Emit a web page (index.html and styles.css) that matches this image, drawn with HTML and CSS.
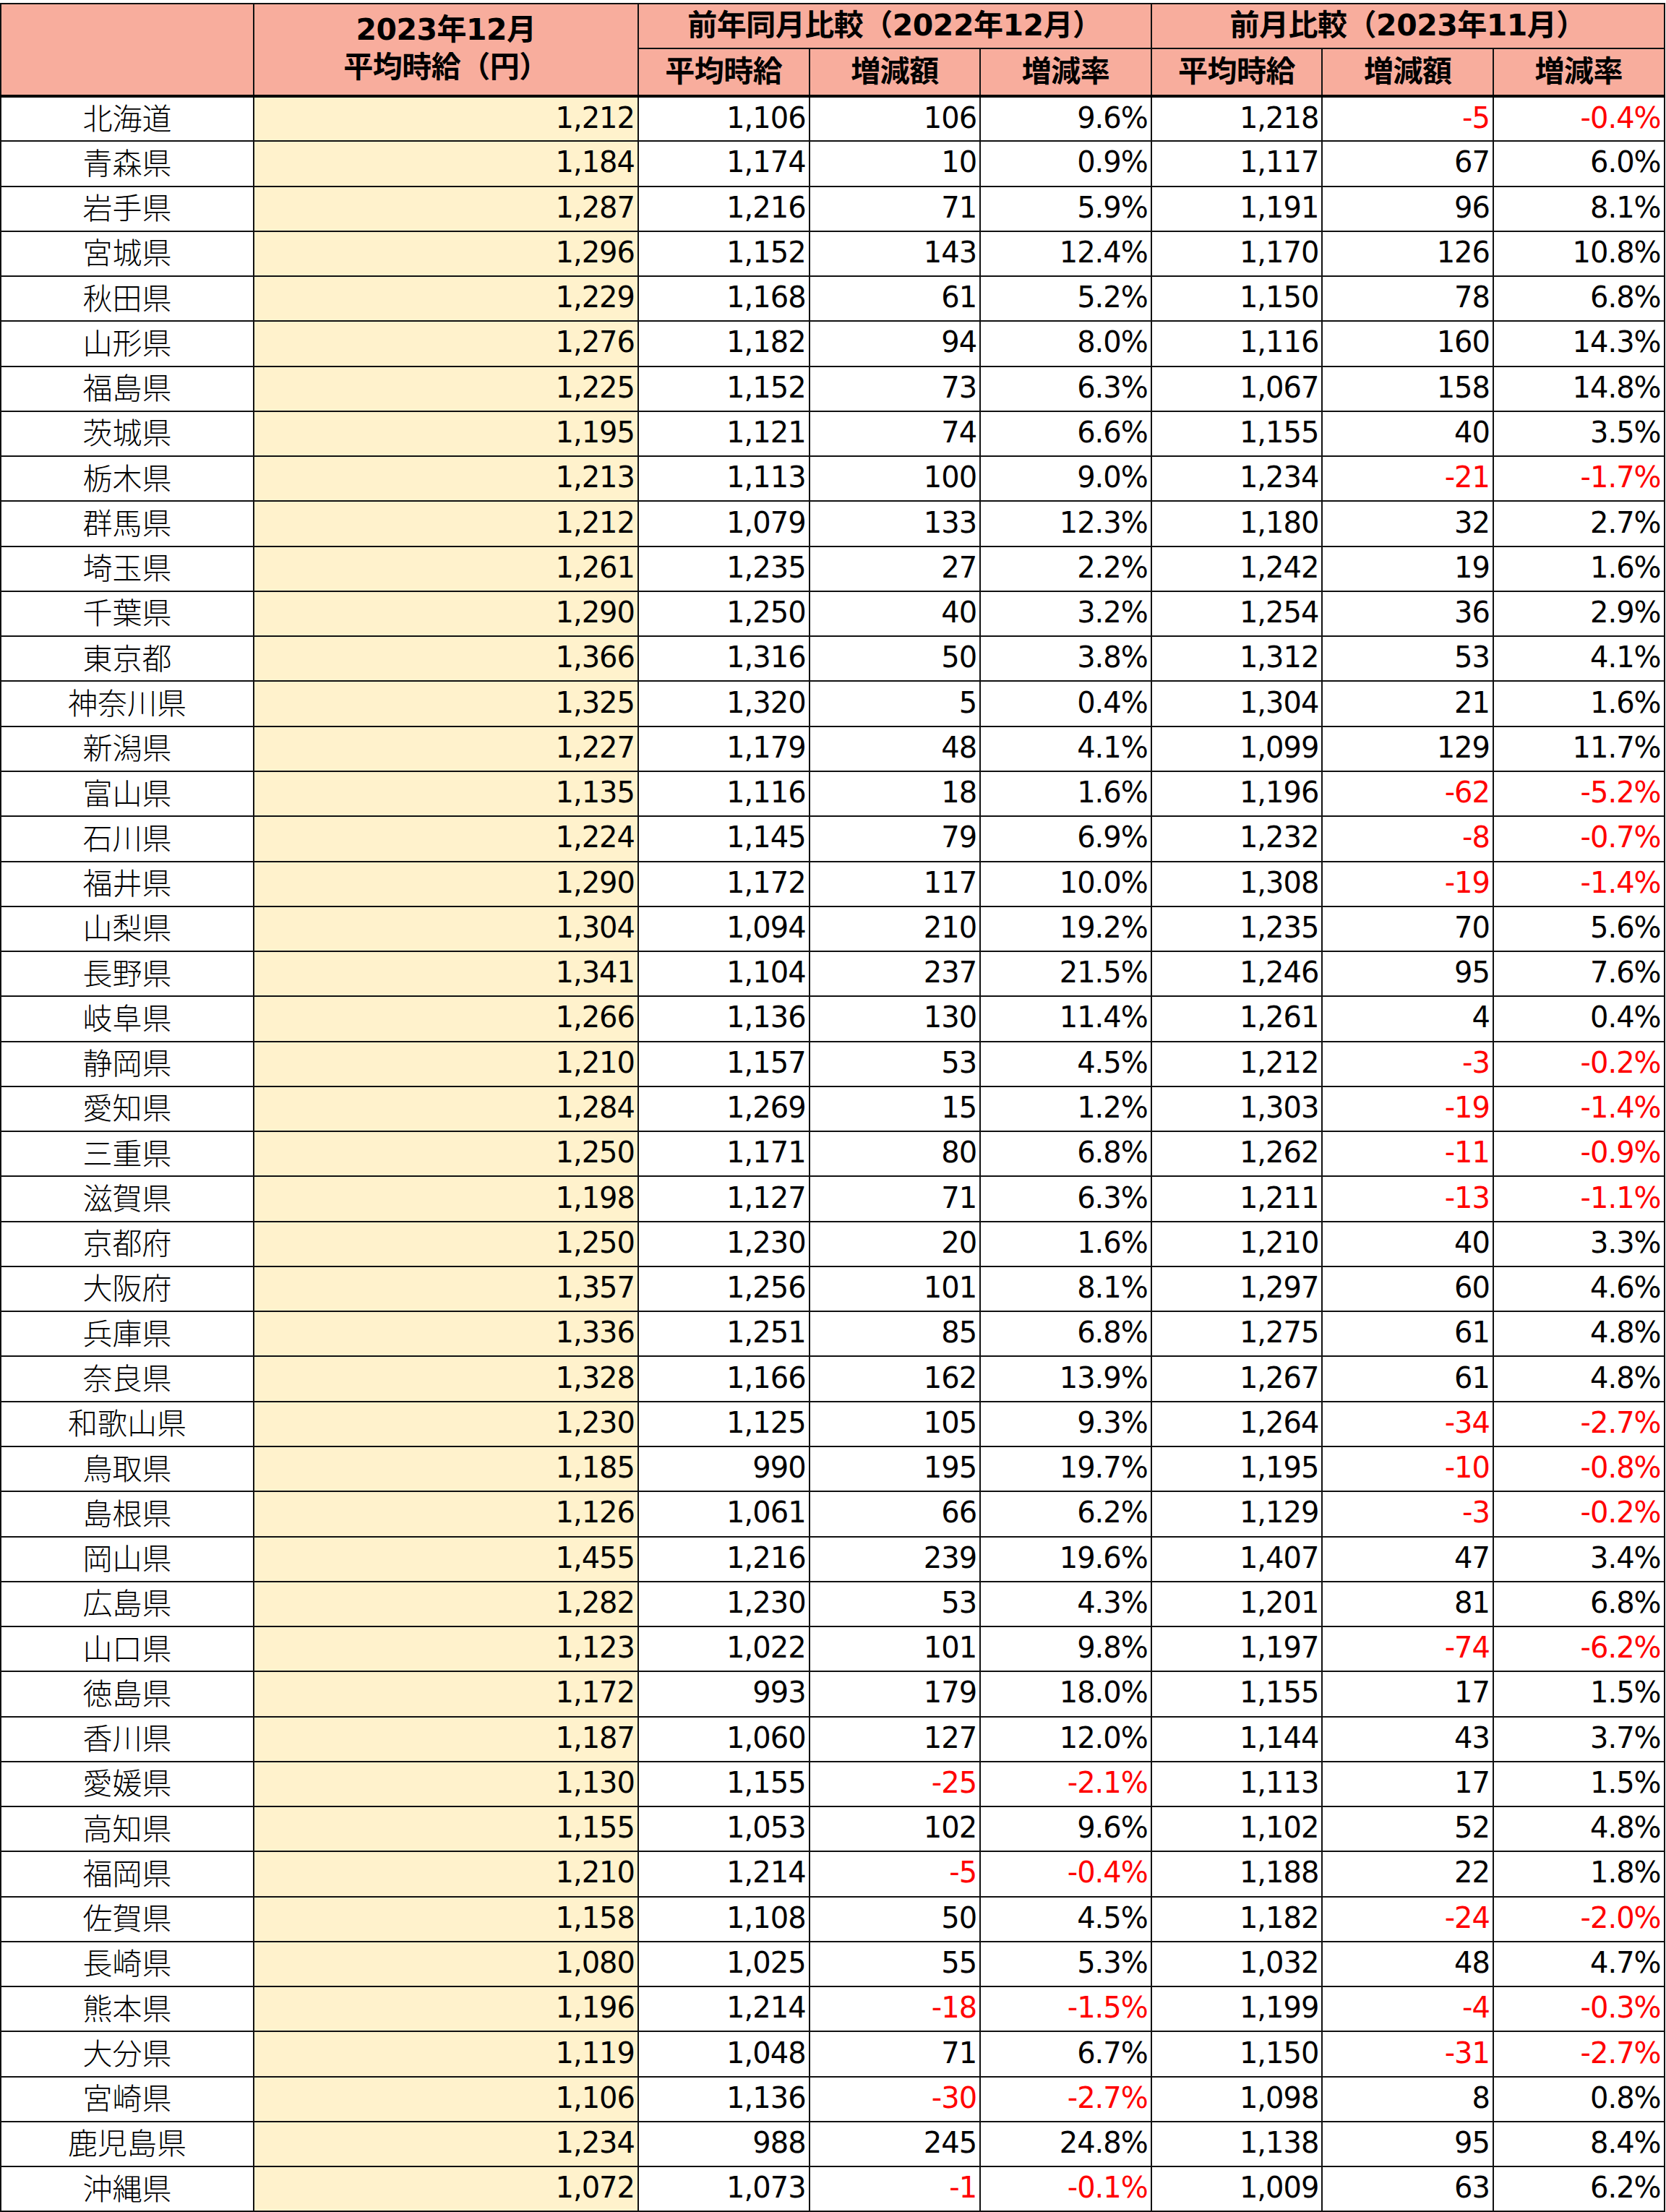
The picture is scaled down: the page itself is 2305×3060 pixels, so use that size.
FILE: index.html
```html
<!DOCTYPE html>
<html lang="ja">
<head>
<meta charset="utf-8">
<title>都道府県別 平均時給</title>
<link rel="stylesheet" href="styles.css">
</head>
<body>
<table class="wage">
  <colgroup>
    <col class="c-pref">
    <col class="c-main">
    <col class="c-n"><col class="c-n"><col class="c-n">
    <col class="c-n"><col class="c-n"><col class="c-n">
  </colgroup>
  <thead>
    <tr class="h1">
      <th rowspan="2"></th>
      <th rowspan="2" class="main-head">2023年12月<br>平均時給（円）</th>
      <th colspan="3">前年同月比較（2022年12月）</th>
      <th colspan="3">前月比較（2023年11月）</th>
    </tr>
    <tr class="h2">
      <th>平均時給</th><th>増減額</th><th>増減率</th>
      <th>平均時給</th><th>増減額</th><th>増減率</th>
    </tr>
  </thead>
  <tbody id="rows">
<tr><td class="pref">北海道</td><td class="main">1,212</td><td>1,106</td><td>106</td><td>9.6%</td><td>1,218</td><td class="neg">-5</td><td class="neg">-0.4%</td></tr>
<tr><td class="pref">青森県</td><td class="main">1,184</td><td>1,174</td><td>10</td><td>0.9%</td><td>1,117</td><td>67</td><td>6.0%</td></tr>
<tr><td class="pref">岩手県</td><td class="main">1,287</td><td>1,216</td><td>71</td><td>5.9%</td><td>1,191</td><td>96</td><td>8.1%</td></tr>
<tr><td class="pref">宮城県</td><td class="main">1,296</td><td>1,152</td><td>143</td><td>12.4%</td><td>1,170</td><td>126</td><td>10.8%</td></tr>
<tr><td class="pref">秋田県</td><td class="main">1,229</td><td>1,168</td><td>61</td><td>5.2%</td><td>1,150</td><td>78</td><td>6.8%</td></tr>
<tr><td class="pref">山形県</td><td class="main">1,276</td><td>1,182</td><td>94</td><td>8.0%</td><td>1,116</td><td>160</td><td>14.3%</td></tr>
<tr><td class="pref">福島県</td><td class="main">1,225</td><td>1,152</td><td>73</td><td>6.3%</td><td>1,067</td><td>158</td><td>14.8%</td></tr>
<tr><td class="pref">茨城県</td><td class="main">1,195</td><td>1,121</td><td>74</td><td>6.6%</td><td>1,155</td><td>40</td><td>3.5%</td></tr>
<tr><td class="pref">栃木県</td><td class="main">1,213</td><td>1,113</td><td>100</td><td>9.0%</td><td>1,234</td><td class="neg">-21</td><td class="neg">-1.7%</td></tr>
<tr><td class="pref">群馬県</td><td class="main">1,212</td><td>1,079</td><td>133</td><td>12.3%</td><td>1,180</td><td>32</td><td>2.7%</td></tr>
<tr><td class="pref">埼玉県</td><td class="main">1,261</td><td>1,235</td><td>27</td><td>2.2%</td><td>1,242</td><td>19</td><td>1.6%</td></tr>
<tr><td class="pref">千葉県</td><td class="main">1,290</td><td>1,250</td><td>40</td><td>3.2%</td><td>1,254</td><td>36</td><td>2.9%</td></tr>
<tr><td class="pref">東京都</td><td class="main">1,366</td><td>1,316</td><td>50</td><td>3.8%</td><td>1,312</td><td>53</td><td>4.1%</td></tr>
<tr><td class="pref">神奈川県</td><td class="main">1,325</td><td>1,320</td><td>5</td><td>0.4%</td><td>1,304</td><td>21</td><td>1.6%</td></tr>
<tr><td class="pref">新潟県</td><td class="main">1,227</td><td>1,179</td><td>48</td><td>4.1%</td><td>1,099</td><td>129</td><td>11.7%</td></tr>
<tr><td class="pref">富山県</td><td class="main">1,135</td><td>1,116</td><td>18</td><td>1.6%</td><td>1,196</td><td class="neg">-62</td><td class="neg">-5.2%</td></tr>
<tr><td class="pref">石川県</td><td class="main">1,224</td><td>1,145</td><td>79</td><td>6.9%</td><td>1,232</td><td class="neg">-8</td><td class="neg">-0.7%</td></tr>
<tr><td class="pref">福井県</td><td class="main">1,290</td><td>1,172</td><td>117</td><td>10.0%</td><td>1,308</td><td class="neg">-19</td><td class="neg">-1.4%</td></tr>
<tr><td class="pref">山梨県</td><td class="main">1,304</td><td>1,094</td><td>210</td><td>19.2%</td><td>1,235</td><td>70</td><td>5.6%</td></tr>
<tr><td class="pref">長野県</td><td class="main">1,341</td><td>1,104</td><td>237</td><td>21.5%</td><td>1,246</td><td>95</td><td>7.6%</td></tr>
<tr><td class="pref">岐阜県</td><td class="main">1,266</td><td>1,136</td><td>130</td><td>11.4%</td><td>1,261</td><td>4</td><td>0.4%</td></tr>
<tr><td class="pref">静岡県</td><td class="main">1,210</td><td>1,157</td><td>53</td><td>4.5%</td><td>1,212</td><td class="neg">-3</td><td class="neg">-0.2%</td></tr>
<tr><td class="pref">愛知県</td><td class="main">1,284</td><td>1,269</td><td>15</td><td>1.2%</td><td>1,303</td><td class="neg">-19</td><td class="neg">-1.4%</td></tr>
<tr><td class="pref">三重県</td><td class="main">1,250</td><td>1,171</td><td>80</td><td>6.8%</td><td>1,262</td><td class="neg">-11</td><td class="neg">-0.9%</td></tr>
<tr><td class="pref">滋賀県</td><td class="main">1,198</td><td>1,127</td><td>71</td><td>6.3%</td><td>1,211</td><td class="neg">-13</td><td class="neg">-1.1%</td></tr>
<tr><td class="pref">京都府</td><td class="main">1,250</td><td>1,230</td><td>20</td><td>1.6%</td><td>1,210</td><td>40</td><td>3.3%</td></tr>
<tr><td class="pref">大阪府</td><td class="main">1,357</td><td>1,256</td><td>101</td><td>8.1%</td><td>1,297</td><td>60</td><td>4.6%</td></tr>
<tr><td class="pref">兵庫県</td><td class="main">1,336</td><td>1,251</td><td>85</td><td>6.8%</td><td>1,275</td><td>61</td><td>4.8%</td></tr>
<tr><td class="pref">奈良県</td><td class="main">1,328</td><td>1,166</td><td>162</td><td>13.9%</td><td>1,267</td><td>61</td><td>4.8%</td></tr>
<tr><td class="pref">和歌山県</td><td class="main">1,230</td><td>1,125</td><td>105</td><td>9.3%</td><td>1,264</td><td class="neg">-34</td><td class="neg">-2.7%</td></tr>
<tr><td class="pref">鳥取県</td><td class="main">1,185</td><td>990</td><td>195</td><td>19.7%</td><td>1,195</td><td class="neg">-10</td><td class="neg">-0.8%</td></tr>
<tr><td class="pref">島根県</td><td class="main">1,126</td><td>1,061</td><td>66</td><td>6.2%</td><td>1,129</td><td class="neg">-3</td><td class="neg">-0.2%</td></tr>
<tr><td class="pref">岡山県</td><td class="main">1,455</td><td>1,216</td><td>239</td><td>19.6%</td><td>1,407</td><td>47</td><td>3.4%</td></tr>
<tr><td class="pref">広島県</td><td class="main">1,282</td><td>1,230</td><td>53</td><td>4.3%</td><td>1,201</td><td>81</td><td>6.8%</td></tr>
<tr><td class="pref">山口県</td><td class="main">1,123</td><td>1,022</td><td>101</td><td>9.8%</td><td>1,197</td><td class="neg">-74</td><td class="neg">-6.2%</td></tr>
<tr><td class="pref">徳島県</td><td class="main">1,172</td><td>993</td><td>179</td><td>18.0%</td><td>1,155</td><td>17</td><td>1.5%</td></tr>
<tr><td class="pref">香川県</td><td class="main">1,187</td><td>1,060</td><td>127</td><td>12.0%</td><td>1,144</td><td>43</td><td>3.7%</td></tr>
<tr><td class="pref">愛媛県</td><td class="main">1,130</td><td>1,155</td><td class="neg">-25</td><td class="neg">-2.1%</td><td>1,113</td><td>17</td><td>1.5%</td></tr>
<tr><td class="pref">高知県</td><td class="main">1,155</td><td>1,053</td><td>102</td><td>9.6%</td><td>1,102</td><td>52</td><td>4.8%</td></tr>
<tr><td class="pref">福岡県</td><td class="main">1,210</td><td>1,214</td><td class="neg">-5</td><td class="neg">-0.4%</td><td>1,188</td><td>22</td><td>1.8%</td></tr>
<tr><td class="pref">佐賀県</td><td class="main">1,158</td><td>1,108</td><td>50</td><td>4.5%</td><td>1,182</td><td class="neg">-24</td><td class="neg">-2.0%</td></tr>
<tr><td class="pref">長崎県</td><td class="main">1,080</td><td>1,025</td><td>55</td><td>5.3%</td><td>1,032</td><td>48</td><td>4.7%</td></tr>
<tr><td class="pref">熊本県</td><td class="main">1,196</td><td>1,214</td><td class="neg">-18</td><td class="neg">-1.5%</td><td>1,199</td><td class="neg">-4</td><td class="neg">-0.3%</td></tr>
<tr><td class="pref">大分県</td><td class="main">1,119</td><td>1,048</td><td>71</td><td>6.7%</td><td>1,150</td><td class="neg">-31</td><td class="neg">-2.7%</td></tr>
<tr><td class="pref">宮崎県</td><td class="main">1,106</td><td>1,136</td><td class="neg">-30</td><td class="neg">-2.7%</td><td>1,098</td><td>8</td><td>0.8%</td></tr>
<tr><td class="pref">鹿児島県</td><td class="main">1,234</td><td>988</td><td>245</td><td>24.8%</td><td>1,138</td><td>95</td><td>8.4%</td></tr>
<tr><td class="pref">沖縄県</td><td class="main">1,072</td><td>1,073</td><td class="neg">-1</td><td class="neg">-0.1%</td><td>1,009</td><td>63</td><td>6.2%</td></tr>
  </tbody>
</table>
</body>
</html>
```
FILE: styles.css
```css
html, body {
  margin: 0;
  padding: 0;
  background: #ffffff;
}
body {
  padding-top: 4px;
  font-family: "DejaVu Sans", "Noto Sans CJK JP", sans-serif;
  color: #000000;
}
.wage {
  border-collapse: collapse;
  table-layout: fixed;
  width: 2302px;
}
.c-pref { width: 350px; }
.c-main { width: 532px; }
.c-n { width: 236.6px; }

.wage th,
.wage td {
  border: 2px solid #111111;
  padding: 0;
  white-space: nowrap;
}
.wage th {
  background: #f8ad9d;
  font-family: "DejaVu Sans", "Noto Sans CJK JP", sans-serif;
  font-weight: bold;
  font-size: 41px;
  letter-spacing: -0.5px;
  text-align: center;
  vertical-align: middle;
  line-height: 1.2;
}
.wage .h1 th { height: 60px; }
.wage .h2 th { height: 63px; }
.wage thead tr.h2 th,
.wage thead .main-head,
.wage thead tr.h1 th:first-child {
  border-bottom: 4px solid #000000;
}
.wage .main-head {
  line-height: 52px;
  padding-bottom: 4px;
}
.wage tbody tr {
  height: 62.28px;
}
.wage td {
  font-size: 40px;
  letter-spacing: -1px;
  text-align: right;
  padding: 0 4px 4px 0;
  vertical-align: middle;
  line-height: 1.15;
}
.wage td.pref {
  font-family: "Noto Sans CJK JP", sans-serif;
  font-weight: 300;
  font-size: 41px;
  letter-spacing: 0;
  text-align: center;
  line-height: 1.2;
  padding: 0 0 6px 0;
}
.wage td.main {
  background: #fff2cc;
}
.wage td.neg {
  color: #ff0000;
}
```
